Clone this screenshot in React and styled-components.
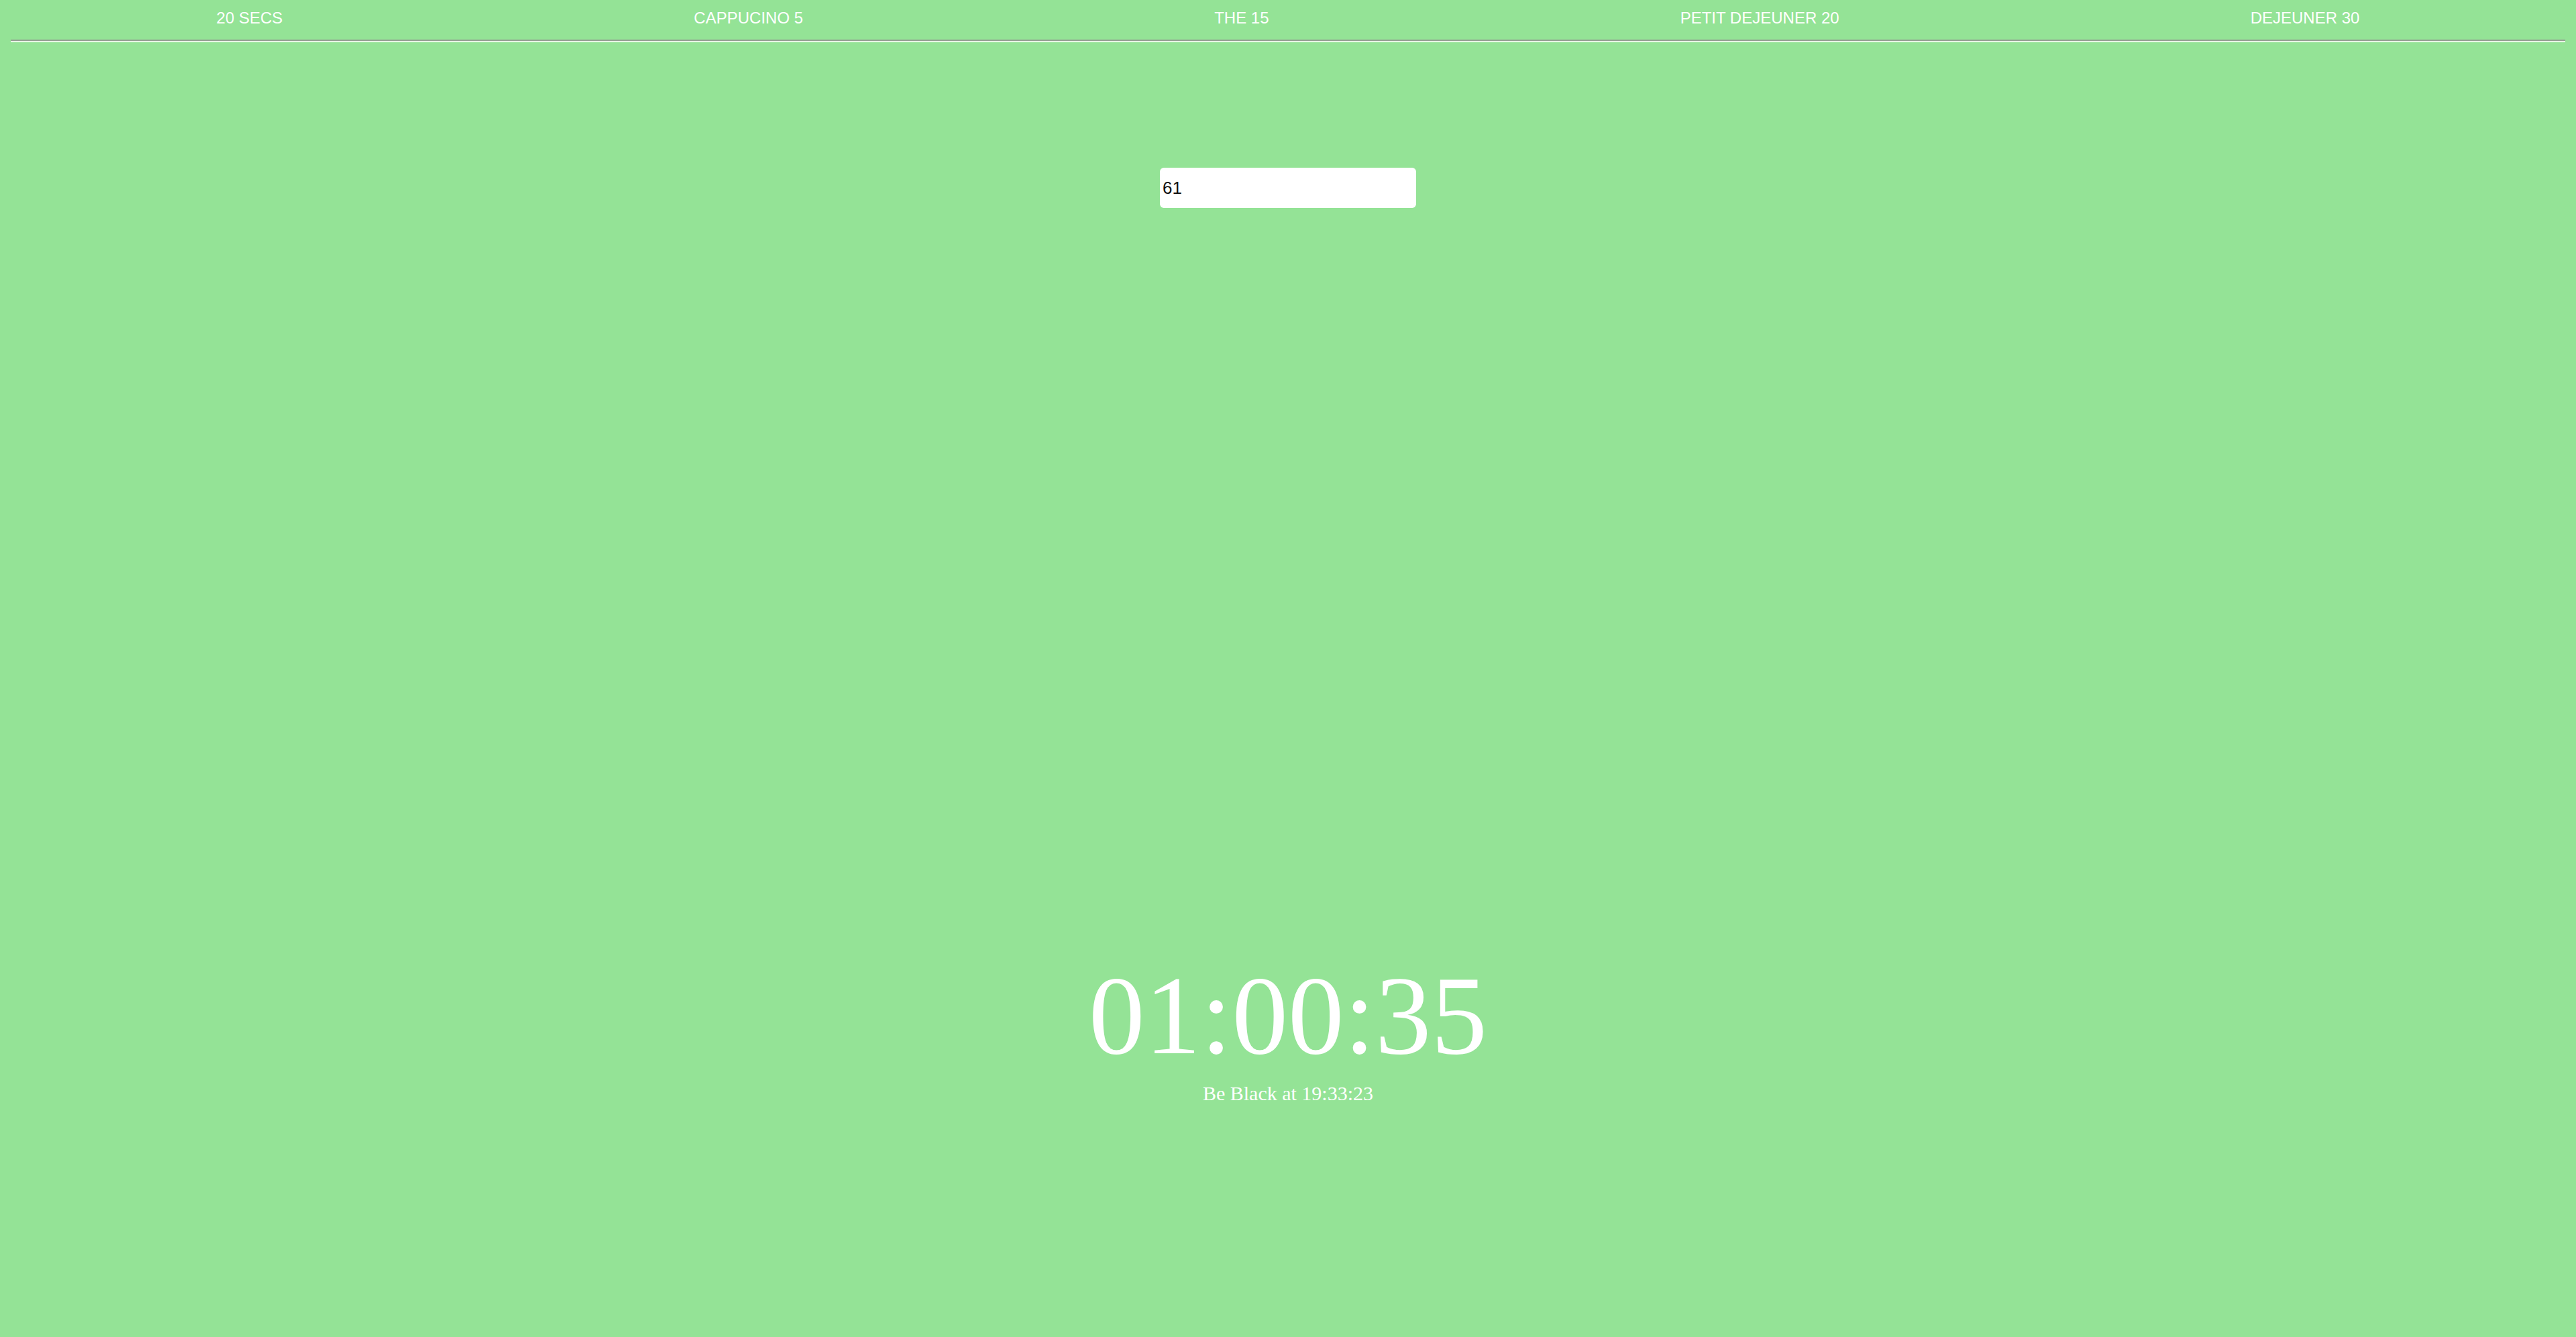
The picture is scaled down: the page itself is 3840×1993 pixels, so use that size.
import React from 'react';
import styled, { createGlobalStyle } from 'styled-components';

const GlobalStyle = createGlobalStyle`
    html, body {
        background: #94e396;
    }
    body {
        margin: 0 16px;
        min-height: 1993px;
    }
`;

const Nav = styled.nav`
    display: flex;
    justify-content: space-around;
    padding-top: 13px;
`;

const NavItem = styled.a`
    font-family: "Liberation Sans", Arial, sans-serif;
    font-size: 24px;
    color: #ffffff;
    text-decoration: none;
    cursor: pointer;
`;

const Divider = styled.hr`
    margin: 18px 0 0;
    border: none;
    border-top: 2px solid #959f93;
    border-bottom: 2px solid #e8f5e6;
    height: 0;
`;

const Main = styled.main`
    display: flex;
    flex-direction: column;
    align-items: center;
`;

const MinutesInput = styled.input`
    box-sizing: border-box;
    margin-top: 187px;
    width: 382px;
    height: 60px;
    padding: 0 4px;
    border: none;
    border-radius: 6px;
    background: #ffffff;
    font-family: "Liberation Sans", Arial, sans-serif;
    font-size: 26px;
    font-weight: 400;
    color: #111111;
    outline: none;
`;

const Clock = styled.div`
    margin-top: 1108px;
    text-align: center;
    color: #ffffff;
    font-family: "Liberation Serif", "Times New Roman", serif;
`;

const Countdown = styled.div`
    font-size: 167px;
`;

const Target = styled.div`
    margin-top: 3px;
    font-size: 30px;
`;

const presets = ['20 SECS', 'CAPPUCINO 5', 'THE 15', 'PETIT DEJEUNER 20', 'DEJEUNER 30'];

const App = () => {
    return (
        <div>
            <GlobalStyle />
            <Nav>
                {presets.map((label) => (
                    <NavItem key={label}>{label}</NavItem>
                ))}
            </Nav>
            <Divider />
            <Main>
                <MinutesInput type="text" defaultValue="61" />
                <Clock>
                    <Countdown>01:00:35</Countdown>
                    <Target>Be Black at 19:33:23</Target>
                </Clock>
            </Main>
        </div>
    );
};

export default App;
